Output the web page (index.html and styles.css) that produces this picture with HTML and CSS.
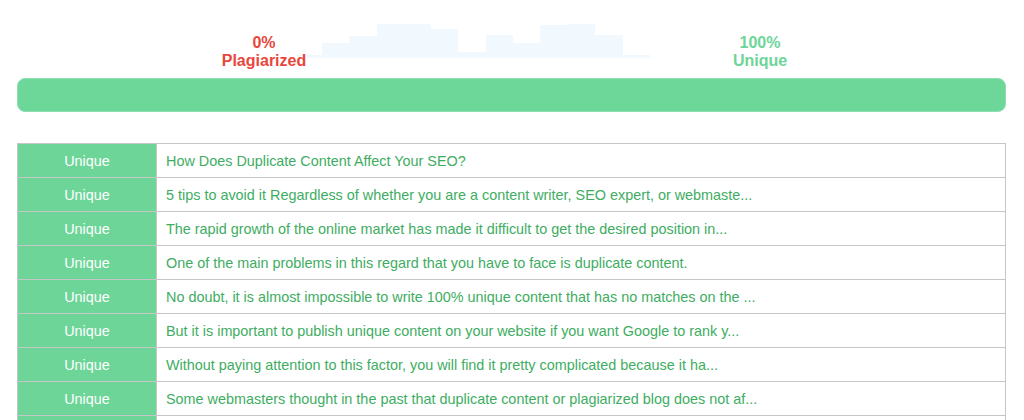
FILE: index.html
```html
<!DOCTYPE html>
<html lang="en">
  <head>
    <meta charset="UTF-8" />
    <meta name="viewport" content="width=device-width, initial-scale=1.0" />
    <title>Plagiarism Report</title>
    <link rel="stylesheet" href="styles.css">
  </head>
  <body>
    <div class="report">
        <div class="summary">
            <div class="label plagiarized">
                <div>0%</div>
                <div>Plagiarized</div>
            </div>
            <svg class="chart" width="353" height="58" viewBox="297 0 353 58">
                <path d="M297 58 V55 H322 V43 H349 V36 H377 V24 H431 V29 H458 V52 H486 V35 H513 V43 H540 V25 H568 V24 H595 V35 H623 V55 H650 V58 Z" fill="#f1f8fe"/>
            </svg>
            <div class="label unique">
                <div>100%</div>
                <div>Unique</div>
            </div>
        </div>

        <div class="bar"></div>

        <table class="results">
            <tr><td class="status">Unique</td><td class="sentence">How Does Duplicate Content Affect Your SEO?</td></tr>
            <tr><td class="status">Unique</td><td class="sentence">5 tips to avoid it Regardless of whether you are a content writer, SEO expert, or webmaste...</td></tr>
            <tr><td class="status">Unique</td><td class="sentence">The rapid growth of the online market has made it difficult to get the desired position in...</td></tr>
            <tr><td class="status">Unique</td><td class="sentence">One of the main problems in this regard that you have to face is duplicate content.</td></tr>
            <tr><td class="status">Unique</td><td class="sentence">No doubt, it is almost impossible to write 100% unique content that has no matches on the ...</td></tr>
            <tr><td class="status">Unique</td><td class="sentence">But it is important to publish unique content on your website if you want Google to rank y...</td></tr>
            <tr><td class="status">Unique</td><td class="sentence">Without paying attention to this factor, you will find it pretty complicated because it ha...</td></tr>
            <tr><td class="status">Unique</td><td class="sentence">Some webmasters thought in the past that duplicate content or plagiarized blog does not af...</td></tr>
            <tr><td class="status"></td><td class="sentence"></td></tr>
        </table>
    </div>
  </body>
</html>
```

FILE: styles.css
```css
body {
    margin: 0;
    background: #fff;
    font-family: "Liberation Sans", Arial, sans-serif;
    font-size: 14.4px;
}
.report {
    margin: 0 18px 0 17px;
}
.summary {
    display: flex;
    align-items: flex-start;
}
.label {
    position: relative;
    z-index: 1;
    width: 100px;
    margin-top: 34px;
    text-align: center;
    font-size: 16px;
    font-weight: bold;
    line-height: 18px;
}
.plagiarized {
    margin-left: 197px;
    color: #e8473d;
}
.unique {
    margin-left: 60px;
    color: #6dd598;
}
.chart {
    display: block;
    margin-left: -17px;
}
.bar {
    margin-top: 8px;
    height: 32px;
    border: 1px solid #8fdfb2;
    border-radius: 8px;
    background: #6dd799;
}
.results {
    width: 100%;
    margin-top: 31px;
    border-collapse: collapse;
}
.results td {
    height: 33px;
    padding: 0 9px;
    border: 1px solid #c6c6c6;
}
.status {
    width: 120px;
    background: #6dd598;
    color: #fff;
    text-align: center;
}
.sentence {
    color: #3ead62;
}
```
